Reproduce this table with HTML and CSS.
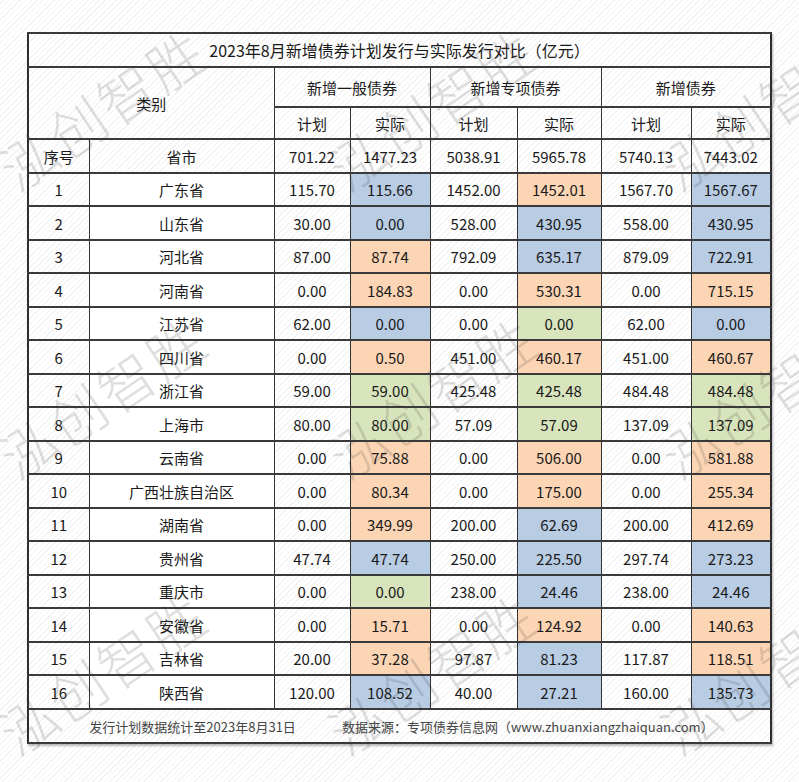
FILE: index.html
```html
<!DOCTYPE html>
<html lang="zh-CN">
<head>
<meta charset="utf-8">
<title>2023年8月新增债券计划发行与实际发行对比</title>
<link rel="stylesheet" href="styles.css">
</head>
<body>
<div class="page">
  <table class="sheet">
    <colgroup>
      <col class="c-seq"><col class="c-prov"><col class="c-a"><col class="c-b"><col class="c-c"><col class="c-d"><col class="c-e"><col class="c-f">
    </colgroup>
    <tr class="r-title"><td colspan="8" class="title">2023年8月新增债券计划发行与实际发行对比（亿元）</td></tr>
    <tr class="r-h1">
      <td colspan="2" rowspan="2">类别</td>
      <td colspan="2">新增一般债券</td>
      <td colspan="2">新增专项债券</td>
      <td colspan="2">新增债券</td>
    </tr>
    <tr class="r-h2">
      <td>计划</td><td>实际</td><td>计划</td><td>实际</td><td>计划</td><td>实际</td>
    </tr>
    <tr class="r-sum">
      <td>序号</td><td>省市</td><td>701.22</td><td>1477.23</td><td>5038.91</td><td>5965.78</td><td>5740.13</td><td>7443.02</td>
    </tr>
    <tr class="r-odd"><td>1</td><td class="prov">广东省</td><td>115.70</td><td class="blue">115.66</td><td>1452.00</td><td class="orange">1452.01</td><td>1567.70</td><td class="blue">1567.67</td></tr>
    <tr class="r-even"><td>2</td><td class="prov">山东省</td><td>30.00</td><td class="blue">0.00</td><td>528.00</td><td class="blue">430.95</td><td>558.00</td><td class="blue">430.95</td></tr>
    <tr class="r-odd"><td>3</td><td class="prov">河北省</td><td>87.00</td><td class="orange">87.74</td><td>792.09</td><td class="blue">635.17</td><td>879.09</td><td class="blue">722.91</td></tr>
    <tr class="r-even"><td>4</td><td class="prov">河南省</td><td>0.00</td><td class="orange">184.83</td><td>0.00</td><td class="orange">530.31</td><td>0.00</td><td class="orange">715.15</td></tr>
    <tr class="r-odd"><td>5</td><td class="prov">江苏省</td><td>62.00</td><td class="blue">0.00</td><td>0.00</td><td class="green">0.00</td><td>62.00</td><td class="blue">0.00</td></tr>
    <tr class="r-even"><td>6</td><td class="prov">四川省</td><td>0.00</td><td class="orange">0.50</td><td>451.00</td><td class="orange">460.17</td><td>451.00</td><td class="orange">460.67</td></tr>
    <tr class="r-odd"><td>7</td><td class="prov">浙江省</td><td>59.00</td><td class="green">59.00</td><td>425.48</td><td class="green">425.48</td><td>484.48</td><td class="green">484.48</td></tr>
    <tr class="r-even"><td>8</td><td class="prov">上海市</td><td>80.00</td><td class="green">80.00</td><td>57.09</td><td class="green">57.09</td><td>137.09</td><td class="green">137.09</td></tr>
    <tr class="r-odd"><td>9</td><td class="prov">云南省</td><td>0.00</td><td class="orange">75.88</td><td>0.00</td><td class="orange">506.00</td><td>0.00</td><td class="orange">581.88</td></tr>
    <tr class="r-even"><td>10</td><td class="prov">广西壮族自治区</td><td>0.00</td><td class="orange">80.34</td><td>0.00</td><td class="orange">175.00</td><td>0.00</td><td class="orange">255.34</td></tr>
    <tr class="r-odd"><td>11</td><td class="prov">湖南省</td><td>0.00</td><td class="orange">349.99</td><td>200.00</td><td class="blue">62.69</td><td>200.00</td><td class="orange">412.69</td></tr>
    <tr class="r-even"><td>12</td><td class="prov">贵州省</td><td>47.74</td><td class="blue">47.74</td><td>250.00</td><td class="blue">225.50</td><td>297.74</td><td class="blue">273.23</td></tr>
    <tr class="r-odd"><td>13</td><td class="prov">重庆市</td><td>0.00</td><td class="green">0.00</td><td>238.00</td><td class="blue">24.46</td><td>238.00</td><td class="blue">24.46</td></tr>
    <tr class="r-even"><td>14</td><td class="prov">安徽省</td><td>0.00</td><td class="orange">15.71</td><td>0.00</td><td class="orange">124.92</td><td>0.00</td><td class="orange">140.63</td></tr>
    <tr class="r-odd"><td>15</td><td class="prov">吉林省</td><td>20.00</td><td class="orange">37.28</td><td>97.87</td><td class="blue">81.23</td><td>117.87</td><td class="orange">118.51</td></tr>
    <tr class="r-even"><td>16</td><td class="prov">陕西省</td><td>120.00</td><td class="blue">108.52</td><td>40.00</td><td class="blue">27.21</td><td>160.00</td><td class="blue">135.73</td></tr>
    <tr class="r-foot"><td colspan="8" class="foot"><span class="foot-date">发行计划数据统计至2023年8月31日</span><span class="foot-src">数据来源：专项债券信息网（www.zhuanxiangzhaiquan.com）</span></td></tr>
  </table>

  <div class="watermarks" aria-hidden="true">
    <span class="wm row1 col1">泓创智胜</span>
    <span class="wm row1 col2">泓创智胜</span>
    <span class="wm row1 col3">泓创智胜</span>
    <span class="wm row2 col1">泓创智胜</span>
    <span class="wm row2 col2">泓创智胜</span>
    <span class="wm row2 col3">泓创智胜</span>
    <span class="wm row3 col1">泓创智胜</span>
    <span class="wm row3 col2">泓创智胜</span>
    <span class="wm row3 col3">泓创智胜</span>
  </div>
</div>
</body>
</html>
```

FILE: styles.css
```css
html, body {
  margin: 0;
  padding: 0;
}

body {
  background: #ffffff;
  font-family: "Noto Sans CJK SC", "Noto Sans", sans-serif;
  color: #1a1a1a;
}

.page {
  position: relative;
  width: 799px;
  height: 782px;
  overflow: hidden;
  padding: 32px 0 0 27px;
  box-sizing: border-box;
  background: repeating-linear-gradient(135deg, #ffffff 0 2px, #f3f3f3 2px 3px, #ffffff 3px 4px);
}

.sheet {
  border-collapse: collapse;
  table-layout: fixed;
  width: 745px;
  border: 2px solid #2e2e2e;
  box-shadow: 1px 2px 2px rgba(0, 0, 0, 0.28);
  font-size: 15px;
}

.c-seq { width: 61px; }
.c-prov { width: 185px; }
.c-a { width: 76px; }
.c-b { width: 80px; }
.c-c { width: 87px; }
.c-d { width: 84px; }
.c-e { width: 90px; }
.c-f { width: 80px; }

.sheet td {
  border-left: 1px solid #333;
  border-right: 1px solid #333;
  border-top: 2px solid #3a3a3a;
  border-bottom: 2px solid #3a3a3a;
  padding: 0;
  text-align: center;
  vertical-align: middle;
  line-height: 1;
  white-space: nowrap;
}

.r-title { height: 34px; }
.r-h1 { height: 40px; }
.r-h2 { height: 32px; }
.r-sum { height: 34px; }
.r-odd { height: 33px; }
.r-even { height: 34px; }
.r-foot { height: 34px; }

.title {
  font-size: 16px;
}

.prov { background: #ffffff; }
.blue { background: #b8cce4; }
.orange { background: #fcd5b4; }
.green { background: #d8e4bc; }

.foot {
  font-size: 13px;
  color: #454545;
}

.foot-date {
  margin-left: 4px;
}

.foot-src {
  margin-left: 46px;
}

.watermarks {
  position: absolute;
  inset: 0;
  pointer-events: none;
}

.wm {
  position: absolute;
  transform: translate(-50%, -50%) rotate(-34deg);
  white-space: nowrap;
  font-family: "Noto Sans CJK SC", sans-serif;
  font-weight: 300;
  font-size: 56px;
  letter-spacing: 3px;
  line-height: 1;
  color: rgba(60, 60, 60, 0.17);
}

.row1 { top: 108px; }
.row2 { top: 396px; }
.row3 { top: 672px; }
.col1 { left: 102px; }
.col2 { left: 432px; }
.col3 { left: 764px; }
```
